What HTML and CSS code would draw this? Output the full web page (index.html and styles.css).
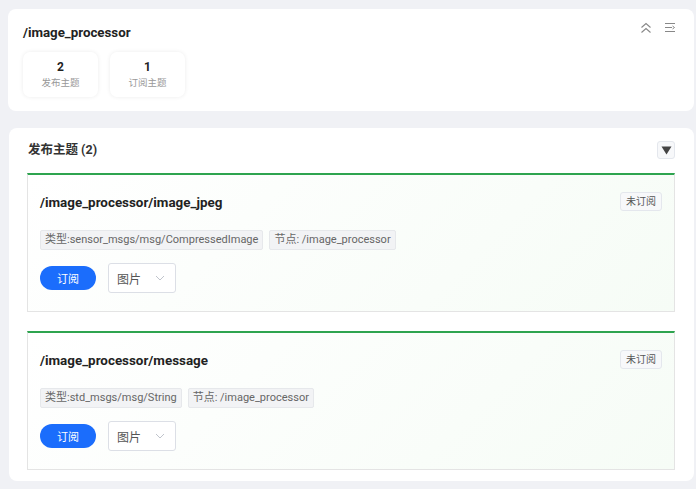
FILE: index.html
```html
<!DOCTYPE html>
<html lang="zh">
<head>
<meta charset="utf-8">
<link rel="stylesheet" href="styles.css">
</head>
<body>
<div class="page">
  <section class="node-card">
    <div class="node-head">
      <h1 class="node-title">/image_processor</h1>
      <div class="node-tools">
        <svg class="tool-icon" width="12" height="12" viewBox="0 0 12 12"><path d="M1.5 5.5 L6 1.5 L10.5 5.5 M1.5 10.5 L6 6.5 L10.5 10.5" fill="none" stroke="#888" stroke-width="1.1"/></svg>
        <svg class="tool-icon" width="12" height="12" viewBox="0 0 12 12"><path d="M1 1.5h10M1 5.5h7M1 9.5h10M8.5 4 L10.5 5.5 L8.5 7" fill="none" stroke="#888" stroke-width="1"/></svg>
      </div>
    </div>
    <div class="stats">
      <div class="stat"><div class="stat-num">2</div><div class="stat-label">发布主题</div></div>
      <div class="stat"><div class="stat-num">1</div><div class="stat-label">订阅主题</div></div>
    </div>
  </section>

  <section class="pub-card">
    <div class="pub-head">
      <h2 class="pub-title">发布主题 (2)</h2>
      <button class="collapse-btn"><svg width="11" height="9" viewBox="0 0 11 9"><path d="M0.5 0.5 H10.5 L5.5 8.5 Z" fill="#444"/></svg></button>
    </div>
    <div class="topic">
      <div class="topic-head">
        <h3 class="topic-title">/image_processor/image_jpeg</h3>
        <span class="badge">未订阅</span>
      </div>
      <div class="tags">
        <span class="tag">类型:sensor_msgs/msg/CompressedImage</span>
        <span class="tag">节点: /image_processor</span>
      </div>
      <div class="actions">
        <button class="sub-btn">订阅</button>
        <div class="select"><span>图片</span><svg width="10" height="6" viewBox="0 0 10 6"><path d="M1 1 L5 5 L9 1" fill="none" stroke="#c0c4cc" stroke-width="1"/></svg></div>
      </div>
    </div>
    <div class="topic">
      <div class="topic-head">
        <h3 class="topic-title">/image_processor/message</h3>
        <span class="badge">未订阅</span>
      </div>
      <div class="tags">
        <span class="tag">类型:std_msgs/msg/String</span>
        <span class="tag">节点: /image_processor</span>
      </div>
      <div class="actions">
        <button class="sub-btn">订阅</button>
        <div class="select"><span>图片</span><svg width="10" height="6" viewBox="0 0 10 6"><path d="M1 1 L5 5 L9 1" fill="none" stroke="#c0c4cc" stroke-width="1"/></svg></div>
      </div>
    </div>
  </section>
</div>
</body>
</html>
```

FILE: styles.css
```css
* { box-sizing: border-box; }
html, body { margin: 0; padding: 0; }
body {
  background: #f0f1f5;
  font-family: Roboto, "Noto Sans CJK SC", sans-serif;
  color: #303133;
  width: 696px;
  height: 489px;
  overflow: hidden;
}
.page {
  padding: 9px 2px 0 8px;
  display: flex;
  flex-direction: column;
  gap: 17px;
}
.node-card {
  background: #fff;
  border-radius: 8px;
  padding: 13px 18px 14px 15px;
  height: 102px;
}
.node-head {
  display: flex;
  justify-content: space-between;
  align-items: flex-start;
}
.node-title {
  margin: 2px 0 0 0;
  font-size: 13.3px;
  font-weight: 700;
  line-height: 18px;
  color: #222;
}
.node-tools { display: flex; gap: 12px; }
.tool-icon { display: block; }
.stats { display: flex; gap: 12px; margin-top: 10px; }
.stat {
  width: 75px;
  height: 45px;
  border-radius: 7px;
  background: #fff;
  box-shadow: 0 0 4px rgba(0,0,0,0.08);
  display: flex;
  flex-direction: column;
  align-items: center;
  padding-top: 7px;
}
.stat-num { font-size: 12px; font-weight: 700; line-height: 16px; color: #222; }
.stat-label { font-size: 9.5px; line-height: 14px; color: #999; margin-top: 1px; }

.pub-card {
  background: #fff;
  border-radius: 8px;
  margin-left: 1px;
  padding: 12px 19px 12px 18px;
  height: 353px;
}
.pub-head {
  display: flex;
  justify-content: space-between;
  align-items: center;
  height: 20px;
  margin-bottom: 13px;
}
.pub-title { margin: 0 0 0 1px; font-size: 12.5px; font-weight: 700; color: #333; line-height: 18px; }
.collapse-btn {
  width: 18px; height: 18px;
  border: 1px solid #e4e7ed;
  border-radius: 3px;
  background: #f7f8fa;
  padding: 0;
  display: flex; align-items: center; justify-content: center;
}
.topic {
  border: 1px solid #e4e4e4;
  border-top: 2px solid #2ea44f;
  background: linear-gradient(135deg, #ffffff 0%, #f6fcf6 100%);
  height: 139px;
  padding: 17px 12px 0 12px;
  margin-bottom: 19px;
}
.topic-head { display: flex; justify-content: space-between; align-items: flex-start; }
.topic-title { margin: 2px 0 0 0; font-size: 13.4px; font-weight: 700; line-height: 18px; color: #222; }
.badge {
  font-size: 10px;
  line-height: 17px;
  padding: 0 5px;
  border: 1px solid #e4e7ed;
  border-radius: 3px;
  background: #f7f8fa;
  color: #555;
}
.tags { display: flex; gap: 6px; margin-top: 18px; }
.tag {
  font-size: 11px;
  line-height: 18px;
  padding: 0 4px;
  background: #f2f3f5;
  border: 1px solid #e6e8eb;
  border-radius: 2px;
  color: #666;
}
.actions { display: flex; align-items: center; gap: 12px; margin-top: 13px; }
.sub-btn {
  width: 56px; height: 24px;
  border: none;
  border-radius: 12px;
  background: #1b6dfc;
  color: #fff;
  font-family: inherit;
  font-size: 11px;
  padding: 0;
}
.select {
  width: 68px; height: 30px;
  border: 1px solid #dcdfe6;
  border-radius: 3px;
  background: #fff;
  display: flex; align-items: center; justify-content: space-between;
  padding: 0 10px 0 8px;
  font-size: 12px;
  color: #555;
}
```
